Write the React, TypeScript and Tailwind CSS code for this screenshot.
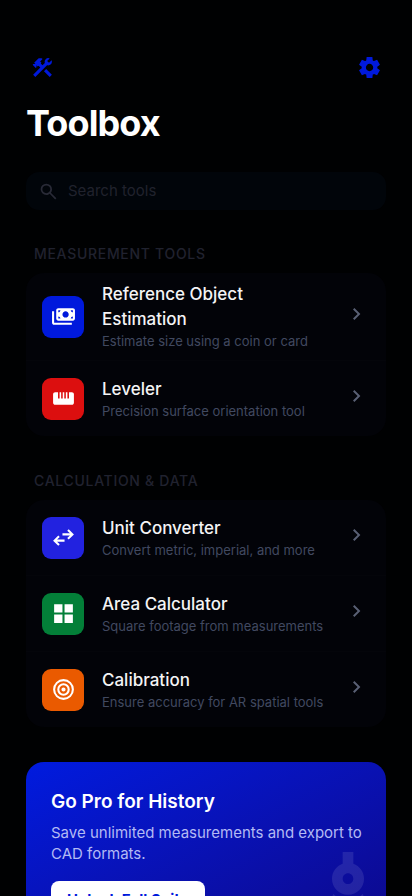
import type { ReactNode } from "react";

function Icon({ d, className }: { d: string; className: string }) {
  return (
    <svg viewBox="0 -960 960 960" fill="currentColor" aria-hidden="true" className={className}>
      <path fillRule="evenodd" d={d} />
    </svg>
  );
}

const paths = {
  construction:
    "M756-120 537-339l84-84 219 219-84 84Zm-552 0-84-84 276-276-68-68-28 28-51-51v82l-28 28-121-121 28-28h82l-50-50 142-142q20-20 43-29t47-9q24 0 47 9t43 29l-92 92 50 50-28 28 68 68 90-90q-4-11-6.5-23t-2.5-24q0-59 40.5-99.5T701-841q15 0 28.5 3t27.5 9l-99 99 72 72 99-99q7 14 9.5 27.5T841-701q0 59-40.5 99.5T701-561q-12 0-24-2t-23-7L204-120Z",
  settings:
    "m370-80-16-128q-13-5-24.5-12T307-235l-119 50L78-375l103-78q-1-7-1-13.5v-27q0-6.5 1-13.5L78-585l110-190 119 50q11-8 23-15t24-12l16-128h220l16 128q13 5 24.5 12t22.5 15l119-50 110 190-103 78q1 7 1 13.5v27q0 6.5-2 13.5l103 78-110 190-118-50q-11 8-23 15t-24 12L590-80H370Zm112-260q58 0 99-41t41-99q0-58-41-99t-99-41q-59 0-99.5 41T342-480q0 58 40.5 99t99.5 41Z",
  search:
    "M784-120 532-372q-30 24-69 38t-83 14q-109 0-184.5-75.5T120-580q0-109 75.5-184.5T380-840q109 0 184.5 75.5T640-580q0 44-14 83t-38 69l252 252-56 56ZM380-400q75 0 127.5-52.5T560-580q0-75-52.5-127.5T380-760q-75 0-127.5 52.5T200-580q0 75 52.5 127.5T380-400Z",
  chevron: "M504-480 320-664l56-56 240 240-240 240-56-56 184-184Z",
  swap: "M280-160 80-360l200-200 56 57-103 103h287v80H233l103 103-56 57Zm400-240-56-57 103-103H440v-80h287L624-743l56-57 200 200-200 200Z",
  grid: "M120-520v-320h320v320H120Zm0 400v-320h320v320H120Zm400-400v-320h320v320H520Zm0 400v-320h320v320H520Z",
  ruler:
    "M160-240q-33 0-56.5-23.5T80-320v-320q0-33 23.5-56.5T160-720h110v240h60v-240h60v240h60v-240h60v240h60v-240h60v240h60v-240h110q33 0 56.5 23.5T880-640v320q0 33-23.5 56.5T800-240H160Z",
  payments:
    "M280-320q-33 0-56.5-23.5T200-400v-320q0-33 23.5-56.5T280-800h560q33 0 56.5 23.5T920-720v320q0 33-23.5 56.5T840-320H280ZM560-440q50 0 85-35t35-85q0-50-35-85t-85-35q-50 0-85 35t-35 85q0 50 35 85t85 35ZM280-400h80q0-33-23.5-56.5T280-480v80Zm480 0h80v-80q-33 0-56.5 23.5T760-400ZM280-640q33 0 56.5-23.5T360-720h-80v80Zm560 0v-80h-80q0 33 23.5 56.5T840-640ZM120-160q-33 0-56.5-23.5T40-240v-440h80v440h680v80H120Z",
  target:
    "M480-80a400 400 0 1 1 0-800 400 400 0 0 1 0 800Zm0-80a320 320 0 1 0 0-640 320 320 0 0 0 0 640Zm0-80a240 240 0 1 1 0-480 240 240 0 0 1 0 480Zm0-80a160 160 0 1 0 0-320 160 160 0 0 0 0 320Zm0-80a80 80 0 1 1 0-160 80 80 0 0 1 0 160Z",
};

type Tool = { title: string; text: string; icon: string; color: string };

const measurement: Tool[] = [
  { title: "Reference Object Estimation", text: "Estimate size using a coin or card", icon: paths.payments, color: "bg-[#0019dc]" },
  { title: "Leveler", text: "Precision surface orientation tool", icon: paths.ruler, color: "bg-[#dc0f0f]" },
];

const calculation: Tool[] = [
  { title: "Unit Converter", text: "Convert metric, imperial, and more", icon: paths.swap, color: "bg-[#2222e0]" },
  { title: "Area Calculator", text: "Square footage from measurements", icon: paths.grid, color: "bg-[#037f38]" },
  { title: "Calibration", text: "Ensure accuracy for AR spatial tools", icon: paths.target, color: "bg-[#ea5a00]" },
];

function ToolRow({ title, text, icon, color }: Tool) {
  return (
    <li>
      <button type="button" className="flex min-h-[75px] w-full items-center px-4 py-[9px] text-left">
        <span className={`flex size-[42px] shrink-0 items-center justify-center rounded-[9px] text-white ${color}`}>
          <Icon d={icon} className="size-[25px]" />
        </span>
        <span className="ml-[18px] flex min-w-0 flex-1 flex-col pr-12">
          <span className="text-[17px] leading-[25px] font-medium text-[#f4f4f5]">{title}</span>
          <span className="text-[13px] leading-[19px] whitespace-nowrap text-[#414960]">{text}</span>
        </span>
        <span className="shrink-0 pr-px pb-1.5 text-[#596074]">
          <Icon d={paths.chevron} className="size-6" />
        </span>
      </button>
    </li>
  );
}

function Section({ heading, className, children }: { heading: string; className: string; children: ReactNode }) {
  return (
    <section className={className}>
      <h2 className="pl-2 text-sm leading-5 font-medium tracking-wider text-[#20222f]">{heading}</h2>
      <ul className="mt-[9px] divide-y divide-[#04050a] overflow-hidden rounded-[18px] bg-[#020308]">{children}</ul>
    </section>
  );
}

export default function App() {
  return (
    <div className="min-h-screen overflow-hidden bg-[#000102] px-[26px] pt-[47px] pb-10 font-['Inter',sans-serif]">
      <header>
        <div className="flex items-center justify-between text-[#0019dc]">
          <span className="flex size-10 items-center pl-1">
            <Icon d={paths.construction} className="size-[25px]" />
          </span>
          <button type="button" aria-label="Settings" className="flex size-10 items-center justify-end pr-1">
            <Icon d={paths.settings} className="size-[25px]" />
          </button>
        </div>
        <h1 className="mt-4 text-4xl leading-10 font-bold tracking-tight text-white">Toolbox</h1>
      </header>

      <label className="mt-[29px] flex h-[38px] items-center rounded-[13px] bg-[#01050a] pl-3 text-[#282a36]">
        <Icon d={paths.search} className="size-[21px] shrink-0" />
        <input
          type="search"
          aria-label="Search tools"
          placeholder="Search tools"
          className="ml-[9px] min-w-0 flex-1 bg-transparent text-[15px] outline-none placeholder:text-[#20222d]"
        />
      </label>

      <main>
        <Section heading="MEASUREMENT TOOLS" className="mt-[34px]">
          {measurement.map((tool) => (
            <ToolRow key={tool.title} {...tool} />
          ))}
        </Section>
        <Section heading="CALCULATION &amp; DATA" className="mt-[35px]">
          {calculation.map((tool) => (
            <ToolRow key={tool.title} {...tool} />
          ))}
        </Section>

        <section className="relative mt-[35px] overflow-hidden rounded-[18px] bg-linear-to-br from-[#001bdf] to-[#0c0888] py-[26px] pr-4 pl-[25px]">
          <svg
            viewBox="0 0 24 24"
            fill="currentColor"
            aria-hidden="true"
            className="absolute top-[74px] -right-[26px] size-32 text-white/10"
          >
            <path d="M6.36 18.78 6.61 21l1.62-1.54 2.77-7.6c-.68-.17-1.28-.51-1.77-.98l-2.87 7.9zM14.77 10.88c-.49.47-1.1.81-1.77.98l2.77 7.6L17.39 21l.26-2.22-2.88-7.9zM15 8c0-1.3-.84-2.4-2-2.82V3h-2v2.18C9.84 5.6 9 6.7 9 8c0 1.66 1.34 3 3 3s3-1.34 3-3zm-3 1c-.55 0-1-.45-1-1s.45-1 1-1 1 .45 1 1-.45 1-1 1z" />
          </svg>
          <h2 className="text-[19px] leading-7 font-semibold text-white">Go Pro for History</h2>
          <p className="mt-1.5 text-[15px] leading-[21px] text-[#b3baf4]">
            Save unlimited measurements and export to CAD formats.
          </p>
          <button
            type="button"
            className="relative mt-[17px] rounded-lg bg-white px-4 py-[9px] text-[15px] leading-5 font-bold text-[#0019dc]"
          >
            Unlock Full Suite
          </button>
        </section>
      </main>
    </div>
  );
}
